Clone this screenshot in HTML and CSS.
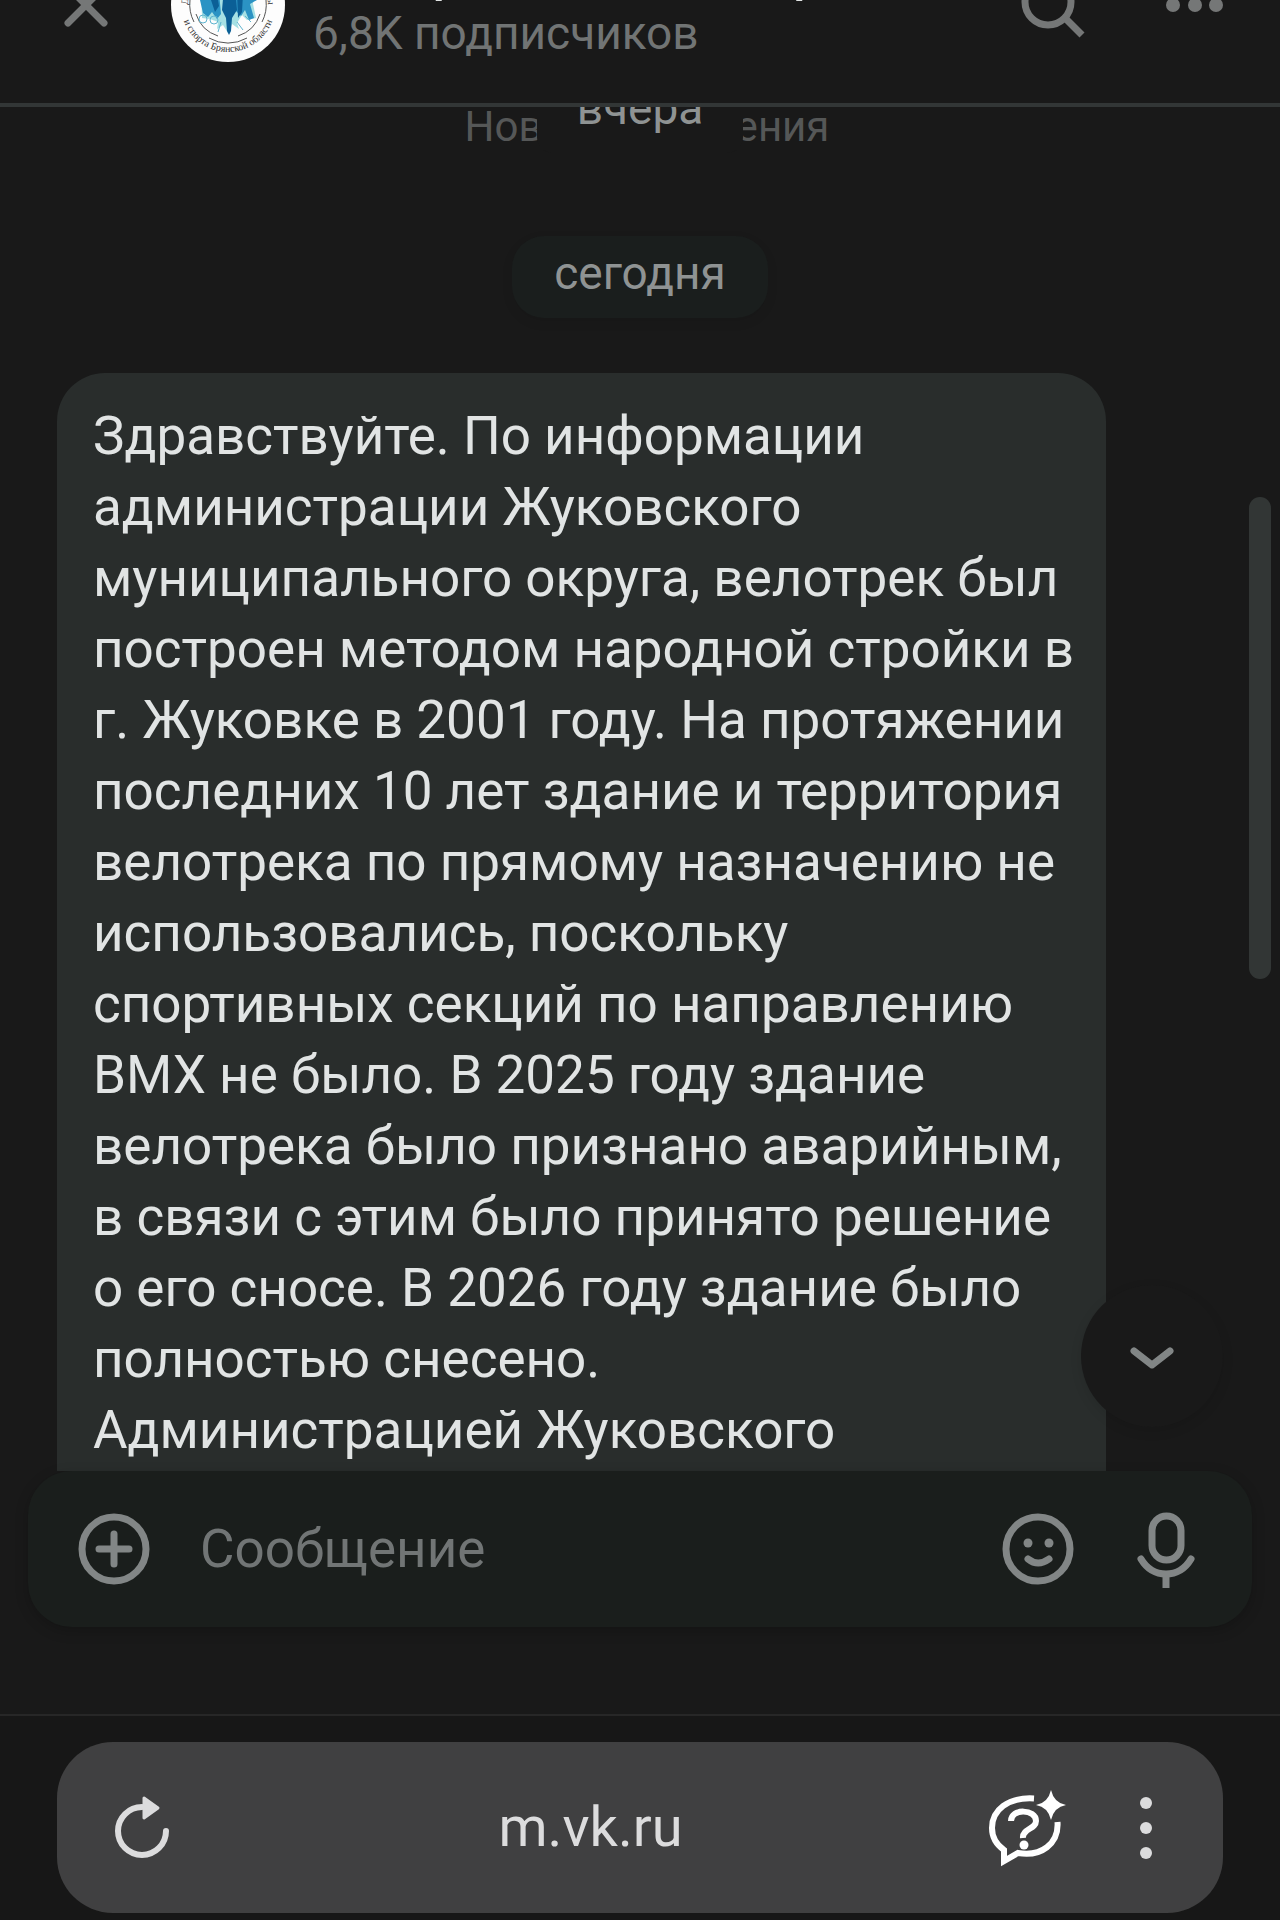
FILE: index.html
```
<!DOCTYPE html>
<html lang="ru">
<head>
  <meta charset="utf-8">
  <title>Сообщения</title>
  <link rel="stylesheet" href="styles.css">
</head>
<body>

<header class="header">
  <button type="button" class="icon-btn" aria-label="Закрыть">
    <svg width="72" height="72" viewBox="0 0 72 72"><path d="M18 18l36 36M54 18L18 54"/></svg>
  </button>
  <svg class="avatar" width="114" height="114" viewBox="0 0 114 114" aria-hidden="true">
    <circle cx="57" cy="57" r="57" fill="#fdfdfd"/>
    <g fill="none" stroke="#555" stroke-width="1">
      <path d="M19 52a38 38 0 0 0 4 22M95 52a38 38 0 0 1 -4 22"/>
      <path d="M25 66a34 34 0 0 0 22 22M89 66a34 34 0 0 1 -22 22M38 90a38 38 0 0 0 38 0"/>
    </g>
    <path fill="#a5e0e4" d="M30 36l54 0 -2 20 3 14 -9 2 -5 -5 -5 8 2 6 -7 -5 -4 9 -5 -8 -6 4 1 -7 -8 -3 -8 -1z"/>
    <path fill="#2b93c4" d="M29 52l8 -6 6 6 5 -8 2 22 -4 5 -5 -7 -4 5 -5 -4zM64 42l14 2 8 8 -7 4 4 14 -5 2 -4 -10 -4 6 -6 -6z"/>
    <path fill="#0b5f96" d="M53 40l11 0 2 22 -5 8 -1 13 -2 4 -2 -4 -1 -13 -4 -8zM66 44l6 2 -1 18 -4 6zM40 52l6 -6 2 12 -4 6z"/>
    <g fill="none" stroke="#5fb4cf">
      <circle cx="32" cy="71" r="4"/>
      <circle cx="43" cy="72" r="4"/>
      <path d="M50 74l-3 10M66 74l6 8M74 68l6 6"/>
    </g>
    <path id="ring-top" fill="none" d="M17 57a40 40 0 0 1 80 0"/>
    <path id="ring" fill="none" d="M10 57a47 47 0 0 0 94 0"/>
    <text class="ring-text"><textPath href="#ring-top">Департамент</textPath></text>
    <text class="ring-text" text-anchor="end"><textPath href="#ring-top" startOffset="100%">культуры</textPath></text>
    <text class="ring-text" text-anchor="middle"><textPath href="#ring" startOffset="50%">и спорта Брянской области</textPath></text>
  </svg>
  <div class="title">
    <h1>Департамент по спор…</h1>
    <p>6,8K подписчиков</p>
  </div>
  <button type="button" class="icon-btn" aria-label="Поиск">
    <svg class="search" width="72" height="72" viewBox="0 0 72 72"><circle cx="31" cy="33" r="23"/><path d="M48 49l17 17"/></svg>
  </button>
  <button type="button" class="icon-btn more" aria-label="Ещё">
    <svg class="dots" width="72" height="72" viewBox="0 0 72 72"><circle cx="14" cy="36" r="7"/><circle cx="36" cy="36" r="7"/><circle cx="57" cy="36" r="7"/></svg>
  </button>
</header>

<main class="chat">
  <div class="divider">
    <span>Новые сообщения</span>
    <span class="date date-sticky">вчера</span>
  </div>
  <div class="date">сегодня</div>
  <div class="message">
    <p>Здравствуйте. По информации администрации Жуковского муниципального округа, велотрек был построен методом народной стройки в г. Жуковке в 2001 году. На протяжении последних 10 лет здание и территория велотрека по прямому назначению не использовались, поскольку спортивных секций по направлению ВМХ не было. В 2025 году здание велотрека было признано аварийным, в связи с этим было принято решение о его сносе. В 2026 году здание было полностью снесено.<br>Администрацией Жуковского</p>
  </div>
  <div class="scrollbar"></div>
  <button type="button" class="to-bottom" aria-label="Вниз">
    <svg width="48" height="28" viewBox="0 0 48 28"><path d="M6 9l18 14L42 9"/></svg>
  </button>
</main>

<form class="composer">
  <button type="button" class="icon-btn" aria-label="Прикрепить">
    <svg width="76" height="76" viewBox="0 0 76 76"><circle cx="38" cy="38" r="32"/><path d="M38 23v30M23 38h30"/></svg>
  </button>
  <input type="text" placeholder="Сообщение" aria-label="Сообщение">
  <button type="button" class="icon-btn" aria-label="Смайлы">
    <svg width="76" height="76" viewBox="0 0 76 76"><circle cx="38" cy="38" r="32"/><path d="M28 48q10 8 21 0"/><g class="eyes"><circle cx="28" cy="32" r="4.500"/><circle cx="49" cy="32" r="4.500"/></g></svg>
  </button>
  <button type="button" class="icon-btn" aria-label="Голосовое сообщение">
    <svg width="76" height="76" viewBox="0 0 76 76"><rect x="24" y="5" width="29" height="44" rx="14.500"/><path d="M13 48q9 15 25 15t25-15"/><path class="butt" d="M38 63v14"/></svg>
  </button>
</form>

<nav class="browser">
  <div class="address">
    <button type="button" class="icon-btn" aria-label="Обновить">
      <svg class="reload" width="64" height="72" viewBox="0 0 64 72"><path d="M32 15a24 24 0 1 0 24 24"/><path class="fill" d="M34 6l14 10 -14 10z"/></svg>
    </button>
    <a href="#">m.vk.ru</a>
    <button type="button" class="icon-btn" aria-label="Спросить">
      <svg class="ask" width="80" height="84" viewBox="0 0 80 84">
        <path d="M49 12.500C23 11 7 24 7 42c0 10 5 17 12 22v11l14-8c23 4 41-9 39.500-31"/>
        <path d="M26 35c0-13 25-12 25 0 0 8-14 8-13 17"/>
        <circle class="fill" cx="39" cy="59" r="4.500"/>
        <path class="fill" d="M66 4q3 13 15 15 -12 2 -15 15 -3 -13 -15 -15 12 -2 15 -15z"/>
      </svg>
    </button>
    <button type="button" class="icon-btn menu" aria-label="Меню">
      <svg class="dots" width="24" height="72" viewBox="0 0 24 72"><circle cx="12" cy="11" r="6"/><circle cx="12" cy="36" r="6"/><circle cx="12" cy="61" r="6"/></svg>
    </button>
  </div>
</nav>

</body>
</html>
```
FILE: styles.css
```
* {
  box-sizing: border-box;
}

body {
  margin: 0;
  height: 100vh;
  display: flex;
  flex-direction: column;
  overflow: hidden;
  background: #191919;
  color: #e1e4e4;
  font-family: Roboto, "Noto Sans", sans-serif;
  font-size: 53px;
  line-height: 71px;
}

h1, p {
  margin: 0;
}

.icon-btn {
  display: flex;
  flex-shrink: 0;
  border: none;
  background: none;
  padding: 0;
  cursor: pointer;
}

.icon-btn svg, .to-bottom svg {
  display: block;
  overflow: visible;
  fill: none;
  stroke: #828686;
  stroke-width: 7;
  stroke-linecap: round;
  stroke-linejoin: round;
}

/* header, scrolled partly off the top */
.header {
  display: flex;
  align-items: center;
  flex-shrink: 0;
  height: 214px;
  margin-top: -107px;
  padding: 14px 49px 0 50px;
  border-bottom: 4px solid #323636;
}

.header .icon-btn svg {
  stroke: #757777;
}

.header .icon-btn .search {
  stroke-linecap: butt;
}

.header .icon-btn .dots {
  fill: #757777;
  stroke: none;
}

.more {
  margin-left: 70px;
}

.avatar {
  flex-shrink: 0;
  margin: 0 28px 0 49px;
}

.ring-text {
  font-family: "Liberation Serif", serif;
  font-size: 10px;
  fill: #333;
}

.title {
  flex: 1;
  min-width: 0;
}

.title h1 {
  margin-bottom: 2px;
  font-size: 50px;
  font-weight: 500;
  line-height: 54px;
  white-space: nowrap;
}

.title p {
  color: #717474;
  font-size: 46px;
  line-height: 60px;
}

.chat {
  position: relative;
  flex: 1;
  min-height: 0;
  overflow: hidden;
  padding: 0 57px;
}

.divider {
  position: relative;
  height: 129px;
  padding-left: 14px;
  color: #555757;
  font-size: 42px;
  line-height: 40px;
  text-align: center;
}

.date {
  width: 256px;
  height: 82px;
  margin: 0 auto;
  border-radius: 32px;
  background: #1a1e1d;
  color: #8f9393;
  font-size: 46px;
  line-height: 74px;
  text-align: center;
  box-shadow: 0 4px 12px rgba(0, 0, 0, .08);
}

.date-sticky {
  position: absolute;
  top: -36px;
  left: 50%;
  width: 206px;
  margin-left: -103px;
  border-radius: 16px;
  background: #191919;
  box-shadow: none;
}

.message {
  width: 90%;
  max-width: 1050px;
  margin-top: 55px;
  padding: 28px 28px 28px 36px;
  border-radius: 48px 48px 0 0;
  background: #292d2c;
}

.scrollbar {
  position: absolute;
  top: 390px;
  right: 9px;
  width: 22px;
  height: 482px;
  border-radius: 11px;
  background: #323635;
}

.to-bottom {
  position: absolute;
  right: 57px;
  bottom: 44px;
  display: flex;
  align-items: center;
  justify-content: center;
  width: 142px;
  height: 142px;
  border: none;
  border-radius: 50%;
  background: #191919;
  box-shadow: 0 4px 12px rgba(0, 0, 0, .1);
}

.composer {
  position: relative;
  display: flex;
  align-items: center;
  flex-shrink: 0;
  height: 156px;
  margin: 0 28px 87px;
  padding: 0 48px;
  border-radius: 44px;
  background: #1a1e1c;
  box-shadow: 0 4px 14px rgba(0, 0, 0, .2);
}

.composer input {
  flex: 1;
  min-width: 0;
  padding: 0 48px;
  border: none;
  outline: none;
  background: none;
  color: #e1e4e4;
  font: inherit;
}

.composer input::placeholder {
  color: #717575;
  opacity: 1;
}

.composer .icon-btn + .icon-btn {
  margin-left: 52px;
}

.composer .eyes {
  fill: #828686;
  stroke: none;
}

.composer .butt {
  stroke-linecap: butt;
}

.browser {
  flex-shrink: 0;
  padding: 26px 57px 7px;
  border-top: 2px solid #272727;
  background: #171717;
}

.address {
  display: flex;
  align-items: center;
  height: 171px;
  padding: 0 65px 0 53px;
  border-radius: 56px;
  background: #404041;
}

.address a {
  flex: 1;
  padding-left: 22px;
  color: #dcdcdd;
  font-size: 56px;
  text-align: center;
  text-decoration: none;
}

.address .reload {
  stroke: #dcdcdd;
  stroke-width: 6;
}

.reload .fill {
  fill: #dcdcdd;
  stroke-width: 3;
}

.address .ask {
  stroke: #fff;
  stroke-width: 6;
  stroke-linecap: butt;
  stroke-linejoin: miter;
}

.ask .fill {
  fill: #fff;
  stroke: none;
}

.menu {
  margin-left: 69px;
}

.address .dots {
  fill: #dcdcdd;
  stroke: none;
}
```
